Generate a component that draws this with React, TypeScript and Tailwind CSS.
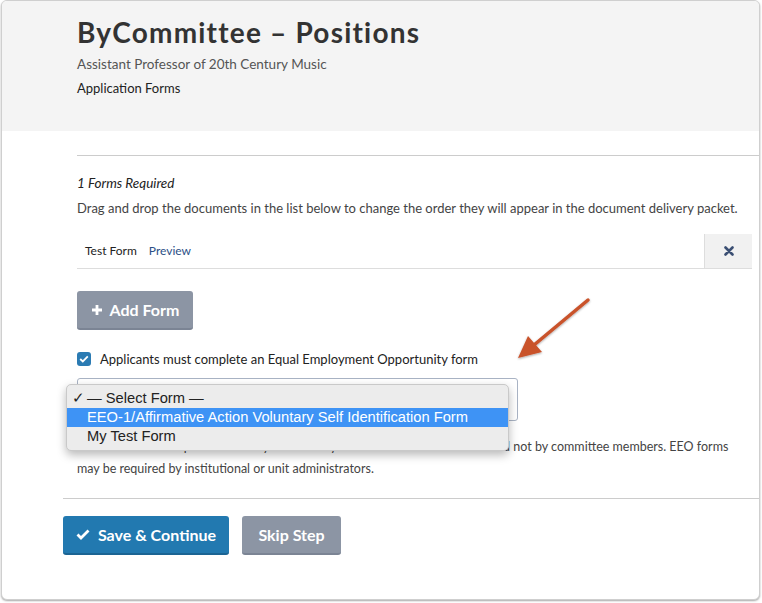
import React from "react";

const body = { fontFamily: "Lato, 'Open Sans', sans-serif" };
const sys = { fontFamily: "'Liberation Sans', Arial, sans-serif" };

function Arrow() {
  return (
    <svg className="absolute left-[504px] top-[291px]" width="95" height="75" viewBox="0 0 95 75">
      <defs>
        <filter id="sh" x="-20%" y="-20%" width="140%" height="140%">
          <feDropShadow dx="0" dy="1" stdDeviation="1" floodColor="#000" floodOpacity="0.35" />
        </filter>
      </defs>
      <g filter="url(#sh)">
        <line x1="82" y1="8" x2="28" y2="53" stroke="#c9522b" strokeWidth="3.5" strokeLinecap="round" />
        <path d="M12 66 L22 44 L36 60 Z" fill="#c9522b" />
      </g>
    </svg>
  );
}

export default function App() {
  return (
    <div className="w-[762px] h-[603px] bg-white relative overflow-hidden">
      <div className="ml-[1px] w-[759px] h-[600px] border border-[#cfcfcf] rounded-[6px] overflow-hidden shadow-[0_1px_2px_rgba(0,0,0,0.35)] relative bg-white">
        <div className="bg-[#f4f4f4] h-[130px] pl-[75px] pt-[13px]">
          <h1 className="text-[28px] leading-[36px] font-bold tracking-[1.2px] text-[#333]" style={body}>
            ByCommittee – Positions
          </h1>
          <div className="text-[13.5px] leading-[20px] mt-[4px] text-[#555]" style={body}>
            Assistant Professor of 20th Century Music
          </div>
          <div className="text-[13px] leading-[20px] mt-[4px] text-[#222]" style={body}>
            Application Forms
          </div>
        </div>

        <div className="pl-[75px]" style={body}>
          <div className="mt-[24px] border-t border-[#cccccc]" />
          <div className="mt-[18px] text-[13.5px] leading-[18px] italic text-[#222]">1 Forms Required</div>
          <div className="mt-[7px] text-[13px] leading-[18px] text-[#444]">
            Drag and drop the documents in the list below to change the order they will appear in the document delivery packet.
          </div>
          <div className="mt-[17px] mr-[7px] h-[35px] flex items-stretch border-b border-[#dddddd]">
            <div className="flex-1 flex items-center pl-[8px] text-[12px]">
              <span className="text-[#222]">Test Form</span>
              <span className="ml-[12px] text-[#2c4f86]">Preview</span>
            </div>
            <div className="w-[48px] bg-[#f1f1f1] border-l border-[#dddddd] flex items-center justify-center">
              <svg width="10" height="10" viewBox="0 0 10 10">
                <path d="M1.5 1.5 L8.5 8.5 M8.5 1.5 L1.5 8.5" stroke="#3b4f73" strokeWidth="2.6" strokeLinecap="round" />
              </svg>
            </div>
          </div>
          <button className="mt-[22px] h-[39px] w-[116px] rounded-[3px] bg-[#8c95a4] border-b-2 border-[#7b8494] flex items-center justify-center gap-[7px] text-white text-[16px] font-bold">
            <svg width="12" height="12" viewBox="0 0 12 12">
              <path d="M6 1 V11 M1 6 H11" stroke="#fff" strokeWidth="2.8" />
            </svg>
            Add Form
          </button>
          <label className="mt-[20px] flex items-center gap-[9px] text-[13px] text-[#222] leading-[18px]">
            <span className="w-[14px] h-[14px] rounded-[3px] bg-[#2b7bb3] flex items-center justify-center">
              <svg width="10" height="8" viewBox="0 0 10 8">
                <path d="M1.2 4 L3.8 6.4 L8.8 1.4" stroke="#fff" strokeWidth="1.8" fill="none" />
              </svg>
            </span>
            Applicants must complete an Equal Employment Opportunity form
          </label>
          <div className="mt-[10px] w-[441px] h-[43px] border border-[#a9b3c4] rounded-[3px] bg-white" />
          <div className="mt-[15px] mr-[24px] text-[12.5px] leading-[22px] text-[#444]">
            Note: EEO form responses are only viewable by institutional administrators and not by committee members. EEO forms may be required by institutional or unit administrators.
          </div>
        </div>

        <div className="ml-[61px] mt-[18px] border-t border-[#cccccc]" />
        <div className="ml-[61px] mt-[17px] flex gap-[13px]" style={body}>
          <button className="h-[39px] w-[166px] rounded-[3px] bg-[#2279b0] border-b-2 border-[#1b6493] flex items-center justify-center gap-[8px] text-white text-[16px] font-bold">
            <svg width="14" height="11" viewBox="0 0 14 11">
              <path d="M1.5 5.5 L5 9 L12.5 1.5" stroke="#fff" strokeWidth="2.8" fill="none" />
            </svg>
            Save &amp; Continue
          </button>
          <button className="h-[39px] w-[99px] rounded-[3px] bg-[#8c95a4] border-b-2 border-[#7b8494] text-white text-[16px] font-bold">
            Skip Step
          </button>
        </div>

        <div
          className="absolute left-[64px] top-[383px] w-[443px] h-[67px] bg-[#ececec] border border-[#c9c9c9] rounded-[5px] shadow-[0_4px_10px_rgba(0,0,0,0.28)] py-[4px] text-[14.7px] leading-[19px] text-[#222]"
          style={sys}
        >
          <div className="flex items-center pl-[5px] h-[19px]">
            <span className="w-[15px]">✓</span>— Select Form —
          </div>
          <div className="flex items-center pl-[20px] h-[19px] bg-[#3e93f5] text-white">
            EEO-1/Affirmative Action Voluntary Self Identification Form
          </div>
          <div className="flex items-center pl-[20px] h-[19px]">My Test Form</div>
        </div>

        <Arrow />
      </div>
    </div>
  );
}
